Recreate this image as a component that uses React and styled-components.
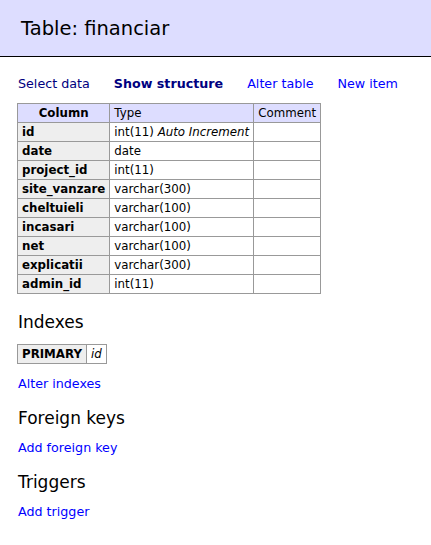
import React from "react";
import styled, { createGlobalStyle } from "styled-components";

const Global = createGlobalStyle`
  html, body { margin: 0; padding: 0; background: #fff; }
  body { font-family: "DejaVu Sans", Verdana, sans-serif; font-size: 12.7px; line-height: 1.25; color: #000; }
`;

const Page = styled.div`
  display: flex;
  flex-direction: column;
  width: 431px;
`;

const Title = styled.h2`
  margin: 0;
  height: 57px;
  box-sizing: border-box;
  display: flex;
  align-items: center;
  padding: 2px 21px 0;
  font-size: 19.5px;
  font-weight: normal;
  background: #ddf;
  border-bottom: 1px solid #000;
`;

const Content = styled.div`
  display: flex;
  flex-direction: column;
  align-items: flex-start;
  padding: 0 18px;
`;

const Links = styled.div`
  display: flex;
  gap: 24px;
  margin-top: 18px;
  height: 17px;
  align-items: center;
`;

const Link = styled.a`
  color: ${(p) => (p.$visited ? "#000080" : "#0000ff")};
  font-weight: ${(p) => (p.$bold ? "bold" : "normal")};
  text-decoration: none;
  white-space: nowrap;
  cursor: pointer;
`;

const Table = styled.table`
  border-collapse: collapse;
  margin: 11px 0 0 -1px;
  font-size: 11.8px;
  line-height: 14px;
`;

const Th = styled.th`
  border: 1px solid #999;
  padding: 2px 4px;
  text-align: ${(p) => (p.$center ? "center" : "left")};
  font-weight: ${(p) => (p.$normal ? "normal" : "bold")};
  background: ${(p) => (p.$head ? "#ddf" : "#eee")};
  white-space: nowrap;
`;

const Td = styled.td`
  border: 1px solid #999;
  padding: 2px 4px;
  background: #fff;
  white-space: nowrap;
`;

const H3 = styled.h3`
  margin: ${(p) => p.$mt || "16px"} 0 0;
  font-size: 17px;
  font-weight: normal;
  line-height: 21px;
`;

const IndexTable = styled.table`
  border-collapse: collapse;
  margin: 11px 0 0 -1px;
  font-size: 11.8px;
  line-height: 14px;
`;

const Para = styled.div`
  margin-top: ${(p) => p.$mt || "11px"};
`;

const cols = [
  ["id", "int(11)", "Auto Increment"],
  ["date", "date"],
  ["project_id", "int(11)"],
  ["site_vanzare", "varchar(300)"],
  ["cheltuieli", "varchar(100)"],
  ["incasari", "varchar(100)"],
  ["net", "varchar(100)"],
  ["explicatii", "varchar(300)"],
  ["admin_id", "int(11)"],
];

export default function App() {
  return (
    <Page>
      <Global />
      <Title>Table: financiar</Title>
      <Content>
        <Links>
          <Link $visited>Select data</Link>
          <Link $visited $bold>Show structure</Link>
          <Link>Alter table</Link>
          <Link>New item</Link>
        </Links>
        <Table>
          <thead>
            <tr>
              <Th $head $center>Column</Th>
              <Th $head $normal>Type</Th>
              <Th $head $normal>Comment</Th>
            </tr>
          </thead>
          <tbody>
            {cols.map(([n, t, extra]) => (
              <tr key={n}>
                <Th>{n}</Th>
                <Td>
                  {t}
                  {extra && <> <i>{extra}</i></>}
                </Td>
                <Td></Td>
              </tr>
            ))}
          </tbody>
        </Table>
        <H3 $mt="18px">Indexes</H3>
        <IndexTable>
          <tbody>
            <tr>
              <Th>PRIMARY</Th>
              <Td><i>id</i></Td>
            </tr>
          </tbody>
        </IndexTable>
        <Para $mt="12px"><Link>Alter indexes</Link></Para>
        <H3>Foreign keys</H3>
        <Para><Link>Add foreign key</Link></Para>
        <H3>Triggers</H3>
        <Para><Link>Add trigger</Link></Para>
      </Content>
    </Page>
  );
}
